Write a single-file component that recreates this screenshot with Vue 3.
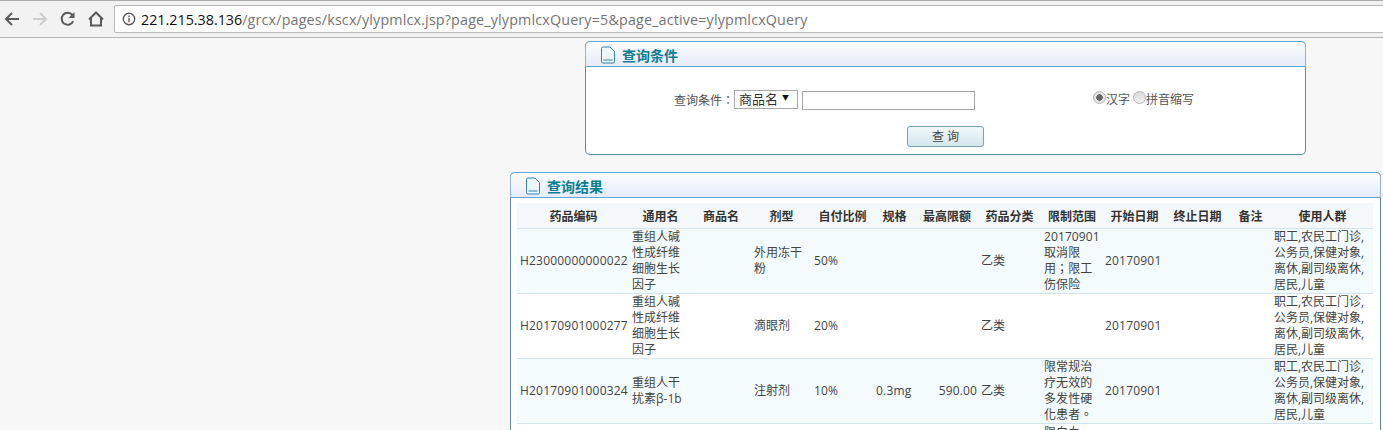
<script setup>
const cols = [
  ['药品编码', 113], ['通用名', 61], ['商品名', 60], ['剂型', 61], ['自付比例', 61], ['规格', 43], ['最高限额', 62],
  ['药品分类', 63], ['限制范围', 62], ['开始日期', 63], ['终止日期', 63], ['备注', 43], ['使用人群', 101]
]
const people = '职工,农民工门诊,公务员,保健对象,离休,副司级离休,居民,儿童'
const rows = [
  { code: 'H23000000000022', name: '重组人碱性成纤维细胞生长因子', form: '外用冻干粉', pay: '50%', spec: '', max: '', cat: '乙类', limit: '20170901取消限用；限工伤保险', start: '20170901', people },
  { code: 'H20170901000277', name: '重组人碱性成纤维细胞生长因子', form: '滴眼剂', pay: '20%', spec: '', max: '', cat: '乙类', limit: '', start: '20170901', people },
  { code: 'H20170901000324', name: '重组人干扰素β-1b', form: '注射剂', pay: '10%', spec: '0.3mg', max: '590.00', cat: '乙类', limit: '限常规治疗无效的多发性硬化患者。', start: '20170901', people }
]
</script>

<template>
  <div class="page">
    <header class="toolbar">
      <svg class="tool" width="18" height="18" viewBox="0 0 18 18"><path d="M16 9H3M9 3 3 9l6 6" fill="none" stroke="#5a5a5a" stroke-width="2"/></svg>
      <svg class="tool" width="18" height="18" viewBox="0 0 18 18"><path d="M2 9h13M9 3l6 6-6 6" fill="none" stroke="#cdcdcd" stroke-width="2"/></svg>
      <svg class="tool" width="18" height="18" viewBox="0 0 18 18"><path d="M14.2 11.2A6 6 0 1 1 13.4 5" fill="none" stroke="#5a5a5a" stroke-width="2"/><path d="M15.5 2v6h-6z" fill="#5a5a5a"/></svg>
      <svg class="tool" width="18" height="18" viewBox="0 0 18 18"><path d="M2 9.5 9 2.5l7 7M4 8v7.5h10V8" fill="none" stroke="#5a5a5a" stroke-width="2"/></svg>
      <div class="omnibox">
        <svg width="14" height="14" viewBox="0 0 14 14"><circle cx="7" cy="7" r="5.7" fill="none" stroke="#5a5a5a" stroke-width="1.4"/><path d="M7 6v4.2M7 3.6v1.4" stroke="#5a5a5a" stroke-width="1.4"/></svg>
        <span class="url"><b>221.215.38.136</b>/grcx/pages/kscx/ylypmlcx.jsp?page_ylypmlcxQuery=5&amp;page_active=ylypmlcxQuery</span>
      </div>
    </header>

    <section class="panel query">
      <div class="panel-head">
        <svg width="16" height="18" viewBox="0 0 16 18"><path d="M1.5 2.5a1.5 1.5 0 0 1 1.5-1.5h7l4.500 4.500V15.500a1.500 1.500 0 0 1-1.500 1.500H3a1.500 1.500 0 0 1-1.500-1.500z" fill="#eef5fb" stroke="#2f86b8"/><path d="M3.500 14h9" stroke="#2f86b8"/></svg>
        <h2>查询条件</h2>
      </div>
      <div class="query-body">
        <div class="form-row">
          <label>查询条件：</label>
          <div class="select"><span>商品名</span><i>▼</i></div>
          <input class="text" type="text" />
          <div class="radios">
            <span class="radio on"></span><span class="radio-label">汉字</span>
            <span class="radio"></span><span>拼音缩写</span>
          </div>
        </div>
        <div class="button-row"><button type="button">查 询</button></div>
      </div>
    </section>

    <section class="panel result">
      <div class="panel-head">
        <svg width="16" height="18" viewBox="0 0 16 18"><path d="M1.5 2.5a1.5 1.5 0 0 1 1.5-1.5h7l4.500 4.500V15.500a1.500 1.500 0 0 1-1.500 1.500H3a1.500 1.500 0 0 1-1.500-1.500z" fill="#eef5fb" stroke="#2f86b8"/><path d="M3.500 14h9" stroke="#2f86b8"/></svg>
        <h2>查询结果</h2>
      </div>
      <div class="result-body">
        <table>
          <colgroup><col v-for="c in cols" :key="c[0]" :width="c[1]" /></colgroup>
          <thead><tr><th v-for="c in cols" :key="c[0]">{{ c[0] }}</th></tr></thead>
          <tbody>
            <tr v-for="r in rows" :key="r.code">
              <td class="lat">{{ r.code }}</td>
              <td class="tight">{{ r.name }}</td>
              <td></td>
              <td>{{ r.form }}</td>
              <td class="lat tight">{{ r.pay }}</td>
              <td class="lat">{{ r.spec }}</td>
              <td class="num">{{ r.max }}</td>
              <td>{{ r.cat }}</td>
              <td class="limit">{{ r.limit }}</td>
              <td class="lat tight">{{ r.start }}</td>
              <td></td>
              <td></td>
              <td class="people">{{ r.people }}</td>
            </tr>
            <tr class="last">
              <td colspan="8"></td>
              <td class="top">限白血</td>
              <td colspan="4"></td>
            </tr>
          </tbody>
        </table>
      </div>
    </section>
  </div>
</template>

<style scoped>
.page {
  width: 1383px;
  height: 430px;
  overflow: hidden;
  background: #f7f7f7;
  font-family: "Open Sans", "Noto Sans CJK SC", sans-serif;
  font-size: 12px;
  color: #444;
}
.toolbar {
  box-sizing: border-box;
  height: 38px;
  display: flex;
  align-items: center;
  padding: 0 0 0 3px;
  gap: 10px;
  background: #f2f2f2;
  border-top: 1px solid #ababab;
  border-bottom: 1px solid #b5b5b5;
}
.tool { flex: none; }
.omnibox {
  flex: 1;
  box-sizing: border-box;
  height: 28px;
  margin-left: -1px;
  margin-right: -4px;
  padding-left: 7px;
  display: flex;
  align-items: center;
  gap: 5px;
  background: #fff;
  border: 1px solid #b9b9b9;
  border-radius: 2px;
}
.url { font-size: 14.3px; letter-spacing: 0.17px; color: #757575; white-space: nowrap; }
.url b { font-weight: 400; letter-spacing: 0; color: #111; }

.panel {
  box-sizing: border-box;
  background: #fff;
  border: 1px solid #5f8f98;
  border-top: 0;
  border-radius: 5px;
}
.query { width: 721px; margin: 3px 0 0 585px; height: 114px; }
.result { width: 871px; margin: 17px 0 0 510px; height: 300px; }
.panel-head {
  box-sizing: border-box;
  height: 26px;
  margin: 0 -1px;
  display: flex;
  align-items: center;
  gap: 6px;
  padding: 2px 0 0 14px;
  border-top: 1px solid #5aa9d8;
  border-bottom: 1px solid #5aa9d8;
  border-left: 1px solid #8fb6c8;
  border-right: 1px solid #8fb6c8;
  border-radius: 5px 5px 0 0;
  background: linear-gradient(#fdfdfe, #e6ebf8);
}
.panel-head h2 { margin: 1px 0 0; font-size: 14px; line-height: 18px; font-weight: 700; color: #0d7f94; }

.query-body { height: 87px; box-sizing: border-box; padding-top: 23px; }
.form-row { display: flex; align-items: center; height: 20px; padding-left: 88px; color: #555; }
.form-row label { width: 60px; font-family: "Open Sans", "Noto Sans CJK TC", sans-serif; }
.select {
  box-sizing: border-box;
  width: 64px;
  height: 19px;
  margin-top: -1px;
  display: flex;
  justify-content: space-between;
  padding: 0 8px 0 4px;
  border: 1px solid #aaa;
  font-size: 13px;
  line-height: 17px;
  color: #333;
}
.select i { font-style: normal; font-size: 7px; line-height: 13px; color: #111; }
.text {
  box-sizing: border-box;
  width: 173px;
  height: 19px;
  margin: 1px 0 0 4px;
  padding: 0;
  background: #fff;
  border: 1px solid #a5a5a5;
}
.radios { display: flex; align-items: center; margin-left: 118px; margin-top: -2px; }
.radio {
  box-sizing: border-box;
  width: 13px;
  height: 13px;
  margin-top: -4px;
  border: 1px solid #b5b5b5;
  border-radius: 50%;
  background: linear-gradient(#d8d8d8, #f2f2f2);
}
.radio.on { background: radial-gradient(circle, #666 0 3px, #e4e4e4 3.5px); }
.radio-label { margin-right: 3px; }
.button-row { display: flex; justify-content: center; margin-top: 16px; }
button {
  box-sizing: border-box;
  width: 77px;
  height: 21px;
  padding: 0;
  font: inherit;
  font-size: 12px;
  line-height: 19px;
  color: #444;
  border: 1px solid #7ba3ad;
  border-radius: 3px;
  background: linear-gradient(#f2f8fa, #d2e6ec);
}

.result-body { padding: 5px 0 0 6px; }
table { width: 856px; table-layout: fixed; border-collapse: collapse; }
th {
  height: 25px;
  padding: 0;
  font-size: 12px;
  font-weight: 700;
  color: #333;
  background: #f6f9fb;
  border-bottom: 1px solid #d4e5ef;
}
td {
  height: 64px;
  padding: 0 3px;
  line-height: 16px;
  word-break: break-all;
  color: #444;
  background: #f4fbfd;
  border-bottom: 1px solid #d4e5ef;
}
tbody tr:nth-child(even) td { background: #fff; }
td.lat { letter-spacing: 0.2px; word-break: normal; }
td.tight { padding: 0 2px; }
td.num { text-align: right; padding-right: 1px; letter-spacing: 0.15px; }
td.limit { font-family: "Open Sans", "Noto Sans CJK TC", sans-serif; letter-spacing: 0.1px; padding-right: 2px; }
td.people { padding-left: 2px; }
td.top { vertical-align: top; padding-top: 1px; }
.last td { height: 80px; }
</style>
